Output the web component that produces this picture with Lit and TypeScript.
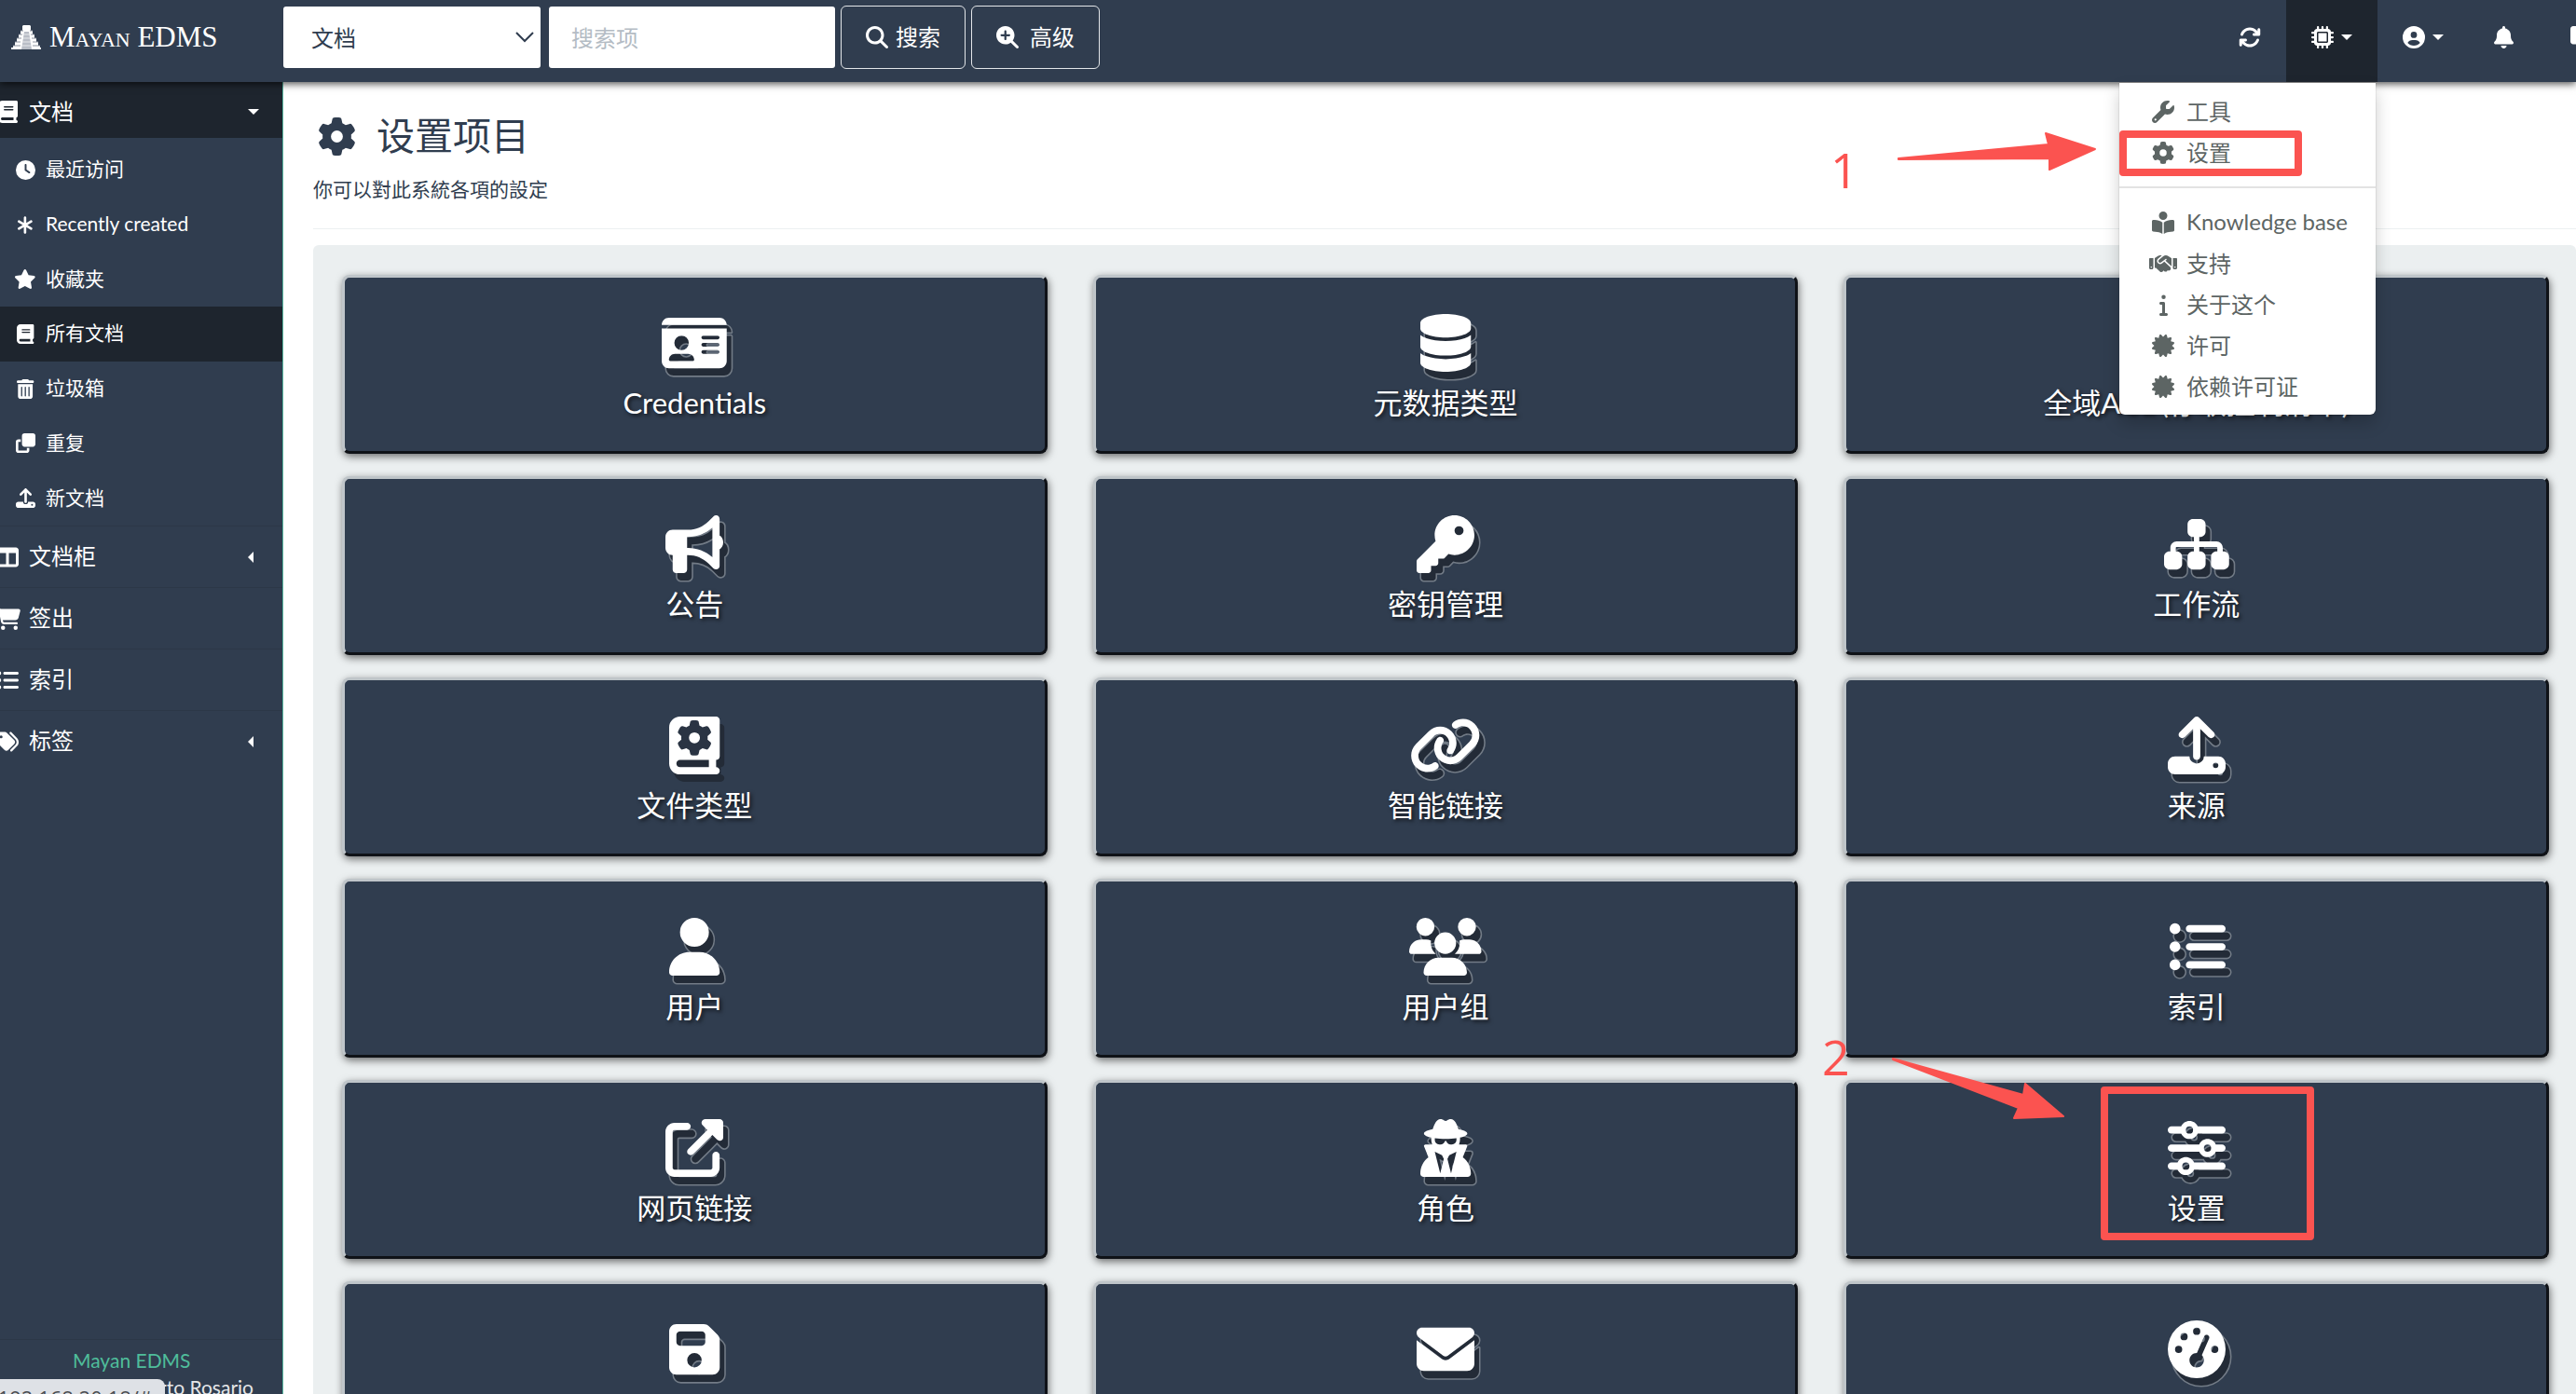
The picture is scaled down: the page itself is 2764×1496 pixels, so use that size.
import { LitElement, html, svg, css, nothing } from "lit";
import { customElement, property } from "lit/decorators.js";
import { classMap } from "lit/directives/class-map.js";

type Glyph = { w: number; d: string };

const DISK =
  "M192 352H64c-35.3 0-64 28.7-64 64v32c0 35.3 28.7 64 64 64H448c35.3 0 64-28.7 64-64V416c0-35.3-28.7-64-64-64H320a64 64 0 0 1-128 0zM424 408a24 24 0 1 1 0 48 24 24 0 1 1 0-48zM233.4 9.4c12.5-12.5 32.8-12.5 45.3 0l128 128c12.5 12.5 12.5 32.8 0 45.3s-32.8 12.5-45.3 0L288 109.3V352c0 17.7-14.3 32-32 32s-32-14.3-32-32V109.3l-73.4 73.4c-12.5 12.5-32.8 12.5-45.3 0s-12.5-32.8 0-45.3l128-128z";

const GEAR =
  "M495.9 166.6c3.2 8.7 .5 18.4-6.4 24.6l-43.3 39.4c1.1 8.3 1.7 16.8 1.7 25.4s-.6 17.1-1.7 25.4l43.3 39.4c6.9 6.2 9.6 15.9 6.4 24.6c-4.4 11.9-9.7 23.3-15.8 34.3l-4.7 8.1c-6.6 11-14 21.4-22.1 31.2c-5.9 7.2-15.7 9.6-24.5 6.8l-55.7-17.7c-13.4 10.3-28.2 18.9-44 25.4l-12.5 57.1c-2 9.1-9 16.3-18.2 17.8c-13.8 2.3-28 3.5-42.5 3.5s-28.7-1.2-42.5-3.5c-9.2-1.5-16.2-8.7-18.2-17.8l-12.5-57.1c-15.8-6.5-30.6-15.1-44-25.4L83.1 425.9c-8.8 2.8-18.6 .3-24.5-6.8c-8.1-9.8-15.5-20.2-22.1-31.2l-4.7-8.1c-6.1-11-11.4-22.4-15.8-34.3c-3.2-8.7-.5-18.4 6.4-24.6l43.3-39.4C64.6 273.1 64 264.6 64 256s.6-17.1 1.7-25.4L22.4 191.2c-6.9-6.2-9.6-15.9-6.4-24.6c4.4-11.9 9.7-23.3 15.8-34.3l4.7-8.1c6.6-11 14-21.4 22.1-31.2c5.9-7.2 15.7-9.6 24.5-6.8l55.7 17.7c13.4-10.3 28.2-18.9 44-25.4l12.5-57.1c2-9.1 9-16.3 18.2-17.8C227.3 1.2 241.5 0 256 0s28.7 1.2 42.5 3.5c9.2 1.5 16.2 8.7 18.2 17.8l12.5 57.1c15.8 6.5 30.6 15.1 44 25.4l55.7-17.7c8.8-2.8 18.6-.3 24.5 6.8c8.1 9.8 15.5 20.2 22.1 31.2l4.7 8.1c6.1 11 11.4 22.4 15.8 34.3zM256 336a80 80 0 1 0 0-160 80 80 0 1 0 0 160z";

const BOOK_BODY =
  "M96 0C43 0 0 43 0 96V416c0 53 43 96 96 96H384h32c17.7 0 32-14.3 32-32s-14.3-32-32-32V384c17.7 0 32-14.3 32-32V32c0-17.7-14.3-32-32-32H384 96zm0 384H352v64H96c-17.7 0-32-14.3-32-32s14.3-32 32-32z";

const ICONS: Record<string, Glyph> = {
  gear: { w: 512, d: GEAR },
  upload: { w: 512, d: DISK },
  bookBody: { w: 448, d: BOOK_BODY },
  book: {
    w: 448,
    d: BOOK_BODY +
      "M128 144c0-8.8 7.2-16 16-16H336c8.8 0 16 7.2 16 16s-7.2 16-16 16H144c-8.8 0-16-7.2-16-16zm16 48H336c8.8 0 16 7.2 16 16s-7.2 16-16 16H144c-8.8 0-16-7.2-16-16s7.2-16 16-16z",
  },
  idCard: {
    w: 576,
    d: "M0 96l576 0c0-35.3-28.7-64-64-64L64 32C28.7 32 0 60.7 0 96zm0 32L0 416c0 35.3 28.7 64 64 64l448 0c35.3 0 64-28.7 64-64l0-288L0 128zM64 405.3c0-29.5 23.9-53.3 53.3-53.3l117.3 0c29.5 0 53.3 23.9 53.3 53.3c0 5.9-4.8 10.7-10.7 10.7L74.7 416c-5.9 0-10.7-4.8-10.7-10.7zM176 192a64 64 0 1 1 0 128 64 64 0 1 1 0-128zm176 16c0-8.8 7.2-16 16-16l128 0c8.8 0 16 7.2 16 16s-7.2 16-16 16l-128 0c-8.8 0-16-7.2-16-16zm0 64c0-8.8 7.2-16 16-16l128 0c8.8 0 16 7.2 16 16s-7.2 16-16 16l-128 0c-8.8 0-16-7.2-16-16zm0 64c0-8.8 7.2-16 16-16l128 0c8.8 0 16 7.2 16 16s-7.2 16-16 16l-128 0c-8.8 0-16-7.2-16-16z",
  },
  database: {
    w: 448,
    d: "M448 80v48c0 44.2-100.3 80-224 80S0 172.2 0 128V80C0 35.8 100.3 0 224 0S448 35.8 448 80zM393.2 214.7c20.8-7.4 39.9-16.9 54.8-28.6V288c0 44.2-100.3 80-224 80S0 332.2 0 288V186.1c14.9 11.8 34 21.2 54.8 28.6C99.7 230.7 159.5 240 224 240s124.3-9.3 169.2-25.3zM0 346.1c14.9 11.8 34 21.2 54.8 28.6C99.7 390.7 159.5 400 224 400s124.3-9.3 169.2-25.3c20.8-7.4 39.9-16.9 54.8-28.6V432c0 44.2-100.3 80-224 80S0 476.2 0 432V346.1z",
  },
  lock: {
    w: 448,
    d: "M144 144v48H304V144c0-44.2-35.8-80-80-80s-80 35.8-80 80zM80 192V144C80 64.5 144.5 0 224 0s144 64.5 144 144v48h16c35.3 0 64 28.7 64 64V448c0 35.3-28.7 64-64 64H64c-35.3 0-64-28.7-64-64V256c0-35.3 28.7-64 64-64H80z",
  },
  bullhorn: {
    w: 512,
    d: "M480 32c0-12.9-7.8-24.6-19.8-29.6s-25.7-2.2-34.9 6.9L381.7 53c-48 48-113.1 75-181 75H192 160 64c-35.3 0-64 28.7-64 64v96c0 35.3 28.7 64 64 64l0 128c0 17.7 14.3 32 32 32h64c17.7 0 32-14.3 32-32V352l8.7 0c67.9 0 133 27 181 75l43.6 43.6c9.2 9.2 22.9 11.9 34.9 6.9s19.8-16.6 19.8-29.6V300.4c18.6-8.8 32-32.5 32-60.4s-13.4-51.6-32-60.4V32zm-64 76.7V240 371.3C357.2 317.8 280.5 288 200.7 288H192V192h8.7c79.8 0 156.5-29.8 215.3-83.3z",
  },
  key: {
    w: 512,
    d: "M336 352c97.2 0 176-78.8 176-176S433.2 0 336 0S160 78.8 160 176c0 18.7 2.9 36.8 8.3 53.7L7 391c-4.5 4.5-7 10.6-7 17v80c0 13.3 10.7 24 24 24h80c13.3 0 24-10.7 24-24V448h40c13.3 0 24-10.7 24-24V384h40c6.4 0 12.5-2.5 17-7l33.3-33.3c16.9 5.4 35 8.3 53.7 8.3zM376 96a40 40 0 1 1 0 80 40 40 0 1 1 0-80z",
  },
  sitemap: {
    w: 576,
    d: "M208 80c0-26.5 21.5-48 48-48h64c26.5 0 48 21.5 48 48v64c0 26.5-21.5 48-48 48h-8v40H464c30.9 0 56 25.1 56 56v32h8c26.5 0 48 21.5 48 48v64c0 26.5-21.5 48-48 48H464c-26.5 0-48-21.5-48-48V368c0-26.5 21.5-48 48-48h8V288c0-4.4-3.6-8-8-8H312v40h8c26.5 0 48 21.5 48 48v64c0 26.5-21.5 48-48 48H256c-26.5 0-48-21.5-48-48V368c0-26.5 21.5-48 48-48h8V280H112c-4.4 0-8 3.6-8 8v32h8c26.5 0 48 21.5 48 48v64c0 26.5-21.5 48-48 48H48c-26.5 0-48-21.5-48-48V368c0-26.5 21.5-48 48-48h8V288c0-30.9 25.1-56 56-56H264V192h-8c-26.5 0-48-21.5-48-48V80z",
  },
  link: {
    w: 640,
    d: "M579.8 267.7c56.5-56.5 56.5-148 0-204.5c-50-50-128.8-56.5-186.3-15.4l-1.6 1.1c-14.4 10.3-17.7 30.3-7.4 44.6s30.3 17.7 44.6 7.4l1.6-1.1c32.1-22.9 76-19.3 103.8 8.6c31.5 31.5 31.5 82.5 0 114L422.3 334.8c-31.5 31.5-82.5 31.5-114 0c-27.9-27.9-31.5-71.8-8.6-103.8l1.1-1.6c10.3-14.4 6.9-34.4-7.4-44.6s-34.4-6.9-44.6 7.4l-1.1 1.6C206.5 251.2 213 330 263 380c56.5 56.5 148 56.5 204.5 0L579.8 267.7zM60.2 244.3c-56.5 56.5-56.5 148 0 204.5c50 50 128.8 56.5 186.3 15.4l1.6-1.1c14.4-10.3 17.7-30.3 7.4-44.6s-30.3-17.7-44.6-7.4l-1.6 1.1c-32.1 22.9-76 19.3-103.8-8.6C74 372 74 321 105.5 289.5L217.7 177.2c31.5-31.5 82.5-31.5 114 0c27.9 27.9 31.5 71.8 8.6 103.9l-1.1 1.6c-10.3 14.4-6.9 34.4 7.4 44.6s34.4 6.9 44.6-7.4l1.1-1.6C433.5 260.8 427 182 377 132c-56.5-56.5-148-56.5-204.5 0L60.2 244.3z",
  },
  user: {
    w: 448,
    d: "M224 256A128 128 0 1 0 224 0a128 128 0 1 0 0 256zm-45.7 48C79.8 304 0 383.8 0 482.3C0 498.7 13.3 512 29.7 512H418.3c16.4 0 29.7-13.3 29.7-29.7C448 383.8 368.2 304 269.7 304H178.3z",
  },
  users: {
    w: 640,
    d: "M144 0a80 80 0 1 1 0 160A80 80 0 1 1 144 0zM512 0a80 80 0 1 1 0 160A80 80 0 1 1 512 0zM0 298.7C0 239.8 47.8 192 106.7 192h42.7c15.9 0 31 3.5 44.6 9.7c-1.3 7.2-1.9 14.7-1.9 22.3c0 38.2 16.8 72.5 43.3 96c-.2 0-.4 0-.7 0H21.3C9.6 320 0 310.4 0 298.7zM405.3 320c-.2 0-.4 0-.7 0c26.6-23.5 43.3-57.8 43.3-96c0-7.6-.7-15-1.9-22.3c13.6-6.3 28.7-9.7 44.6-9.7h42.7C592.2 192 640 239.8 640 298.7c0 11.8-9.6 21.3-21.3 21.3H405.3zM224 224a96 96 0 1 1 192 0 96 96 0 1 1 -192 0zM128 485.3C128 411.7 187.7 352 261.3 352H378.7C452.3 352 512 411.7 512 485.3c0 14.7-11.9 26.7-26.7 26.7H154.7c-14.7 0-26.7-11.9-26.7-26.7z",
  },
  list: {
    w: 512,
    d: "M64 144a48 48 0 1 0 0-96 48 48 0 1 0 0 96zM192 64c-17.7 0-32 14.3-32 32s14.3 32 32 32H480c17.7 0 32-14.3 32-32s-14.3-32-32-32H192zm0 160c-17.7 0-32 14.3-32 32s14.3 32 32 32H480c17.7 0 32-14.3 32-32s-14.3-32-32-32H192zm0 160c-17.7 0-32 14.3-32 32s14.3 32 32 32H480c17.7 0 32-14.3 32-32s-14.3-32-32-32H192zM64 464a48 48 0 1 0 0-96 48 48 0 1 0 0 96zm48-208a48 48 0 1 0 -96 0 48 48 0 1 0 96 0z",
  },
  external: {
    w: 512,
    d: "M352 0c-12.9 0-24.6 7.8-29.6 19.8s-2.2 25.7 6.9 34.9L370.7 96 201.4 265.4c-12.5 12.5-12.5 32.8 0 45.3s32.8 12.5 45.3 0L416 141.3l41.4 41.4c9.2 9.2 22.9 11.9 34.9 6.9s19.8-16.6 19.8-29.6V32c0-17.7-14.3-32-32-32H352zM80 32C35.8 32 0 67.8 0 112V432c0 44.2 35.8 80 80 80H400c44.2 0 80-35.8 80-80V320c0-17.7-14.3-32-32-32s-32 14.3-32 32V432c0 8.8-7.2 16-16 16H80c-8.8 0-16-7.2-16-16V112c0-8.8 7.2-16 16-16H192c17.7 0 32-14.3 32-32s-14.3-32-32-32H80z",
  },
  secret: {
    w: 448,
    d: "M224 16c-6.7 0-10.8-2.8-15.5-6.1C201.9 5.4 194 0 176 0c-30.5 0-52 43.7-66 89.4C62.7 98.1 32 112.2 32 128c0 14.3 25 27.1 64.6 35.9c-.4 4-.6 8-.6 12.1c0 17 3.3 33.2 9.3 48H45.4C38 224 32 230 32 237.4c0 1.7 .3 3.4 1 5l38.8 96.9C28.2 371.8 0 423.8 0 482.3C0 498.7 13.3 512 29.7 512H418.3c16.4 0 29.7-13.3 29.7-29.7c0-58.5-28.2-110.4-71.7-143L415 242.4c.6-1.6 1-3.3 1-5c0-7.4-6-13.4-13.4-13.4H342.7c6-14.8 9.3-31 9.3-48c0-4.1-.2-8.1-.6-12.1C391 155.1 416 142.3 416 128c0-15.8-30.7-29.9-78-38.6C324 43.7 302.5 0 272 0c-18 0-25.9 5.4-32.5 9.9c-4.8 3.3-8.8 6.1-15.5 6.1zm56 208H267.6c-16.5 0-31.1-10.6-36.3-26.2c-2.3-7-12.2-7-14.5 0c-5.2 15.6-19.9 26.2-36.3 26.2H168c-22.1 0-40-17.9-40-40V169.6c28.2 4.1 61 6.4 96 6.4s67.8-2.3 96-6.4V184c0 22.1-17.9 40-40 40zm-88 96l16 32L176 480 128 288l64 32zm128-32L272 480 240 352l16-32 64-32z",
  },
  sliders: {
    w: 512,
    d: "M0 416c0 17.7 14.3 32 32 32l54.7 0c12.3 28.3 40.5 48 73.3 48s61-19.7 73.3-48L480 448c17.7 0 32-14.3 32-32s-14.3-32-32-32l-246.7 0c-12.3-28.3-40.5-48-73.3-48s-61 19.7-73.3 48L32 384c-17.7 0-32 14.3-32 32zm128 0a32 32 0 1 1 64 0 32 32 0 1 1 -64 0zM320 256a32 32 0 1 1 64 0 32 32 0 1 1 -64 0zm32-80c-32.8 0-61 19.7-73.3 48L32 224c-17.7 0-32 14.3-32 32s14.3 32 32 32l246.7 0c12.3 28.3 40.5 48 73.3 48s61-19.7 73.3-48l54.7 0c17.7 0 32-14.3 32-32s-14.3-32-32-32l-54.7 0c-12.3-28.3-40.5-48-73.3-48zM192 128a32 32 0 1 1 0-64 32 32 0 1 1 0 64zm73.3-64C253 35.7 224.8 16 192 16s-61 19.7-73.3 48L32 64C14.3 64 0 78.3 0 96s14.3 32 32 32l86.7 0c12.3 28.3 40.5 48 73.3 48s61-19.7 73.3-48L480 128c17.7 0 32-14.3 32-32s-14.3-32-32-32L265.3 64z",
  },
  floppy: {
    w: 448,
    d: "M64 32C28.7 32 0 60.7 0 96V416c0 35.3 28.7 64 64 64H384c35.3 0 64-28.7 64-64V173.3c0-17-6.7-33.3-18.7-45.3L352 50.7C340 38.7 323.7 32 306.7 32H64zm0 96c0-17.7 14.3-32 32-32H288c17.7 0 32 14.3 32 32v64c0 17.7-14.3 32-32 32H96c-17.7 0-32-14.3-32-32V128zM224 288a64 64 0 1 1 0 128 64 64 0 1 1 0-128z",
  },
  envelope: {
    w: 512,
    d: "M48 64C21.5 64 0 85.5 0 112c0 15.1 7.1 29.3 19.2 38.4L236.8 313.6c11.4 8.5 27 8.5 38.4 0L492.8 150.4c12.1-9.1 19.2-23.3 19.2-38.4c0-26.5-21.5-48-48-48H48zM0 176V384c0 35.3 28.7 64 64 64H448c35.3 0 64-28.7 64-64V176L294.4 339.2c-22.8 17.1-54 17.1-76.8 0L0 176z",
  },
  gauge: {
    w: 512,
    d: "M0 256a256 256 0 1 1 512 0A256 256 0 1 1 0 256zM288 96a32 32 0 1 0 -64 0 32 32 0 1 0 64 0zM256 416c35.3 0 64-28.7 64-64c0-17.4-6.9-33.1-18.1-44.6L366 161.7c5.3-12.1-.2-26.3-12.3-31.6s-26.3 .2-31.6 12.3L257.9 288c-.6 0-1.3 0-1.9 0c-35.3 0-64 28.7-64 64s28.7 64 64 64zM176 144a32 32 0 1 0 -64 0 32 32 0 1 0 64 0zM96 288a32 32 0 1 0 0-64 32 32 0 1 0 0 64zm352-32a32 32 0 1 0 -64 0 32 32 0 1 0 64 0z",
  },
  search: {
    w: 512,
    d: "M416 208c0 45.9-14.9 88.3-40 122.7L502.6 457.4c12.5 12.5 12.5 32.8 0 45.3s-32.8 12.5-45.3 0L330.7 376c-34.4 25.2-76.8 40-122.7 40C93.1 416 0 322.9 0 208S93.1 0 208 0S416 93.1 416 208zM208 352a144 144 0 1 0 0-288 144 144 0 1 0 0 288z",
  },
  searchPlus: {
    w: 512,
    d: "M416 208c0 45.9-14.9 88.3-40 122.7L502.6 457.4c12.5 12.5 12.5 32.8 0 45.3s-32.8 12.5-45.3 0L330.7 376c-34.4 25.2-76.8 40-122.7 40C93.1 416 0 322.9 0 208S93.1 0 208 0S416 93.1 416 208zM184 296c0 13.3 10.7 24 24 24s24-10.7 24-24V232h64c13.3 0 24-10.7 24-24s-10.7-24-24-24H232V120c0-13.3-10.7-24-24-24s-24 10.7-24 24v64H120c-13.3 0-24 10.7-24 24s10.7 24 24 24h64v64z",
  },
  rotate: {
    w: 512,
    d: "M105.1 202.6c7.7-21.8 20.2-42.3 37.8-59.8c62.5-62.5 163.8-62.5 226.3 0L386.3 160H352c-17.7 0-32 14.3-32 32s14.3 32 32 32H463.5h.4c17.7 0 32-14.3 32-32V80c0-17.7-14.3-32-32-32s-32 14.3-32 32v35.2L414.4 97.6c-87.5-87.5-229.3-87.5-316.8 0C73.2 122 55.6 150.7 44.8 181.4c-5.9 16.7 2.9 34.9 19.5 40.8s34.9-2.9 40.8-19.5zM39 289.3c-5 1.5-9.8 4.2-13.7 8.2c-4 4-6.7 8.8-8.1 14c-.3 1.2-.6 2.5-.8 3.8c-.3 1.7-.4 3.4-.4 5.1V432c0 17.7 14.3 32 32 32s32-14.3 32-32V396.9l17.6 17.5c87.5 87.4 229.3 87.4 316.7 0c24.4-24.4 42.1-53.1 52.9-83.7c5.9-16.7-2.9-34.9-19.5-40.8s-34.9 2.9-40.8 19.5c-7.7 21.8-20.2 42.3-37.8 59.8c-62.5 62.5-163.8 62.5-226.3 0l-.1-.1L125.6 352H160c17.7 0 32-14.3 32-32s-14.3-32-32-32H48.4c-1.6 0-3.2 .1-4.8 .3s-3.1 .5-4.6 1z",
  },
  chip: {
    w: 512,
    d: "M176 24c0-13.3-10.7-24-24-24s-24 10.7-24 24v40c-35.3 0-64 28.7-64 64H24c-13.3 0-24 10.7-24 24s10.7 24 24 24h40v56H24c-13.3 0-24 10.7-24 24s10.7 24 24 24h40v56H24c-13.3 0-24 10.7-24 24s10.7 24 24 24h40c0 35.3 28.7 64 64 64v40c0 13.3 10.7 24 24 24s24-10.7 24-24v-40h56v40c0 13.3 10.7 24 24 24s24-10.7 24-24v-40h56v40c0 13.3 10.7 24 24 24s24-10.7 24-24v-40c35.3 0 64-28.7 64-64h40c13.3 0 24-10.7 24-24s-10.7-24-24-24h-40v-56h40c13.3 0 24-10.7 24-24s-10.7-24-24-24h-40v-56h40c13.3 0 24-10.7 24-24s-10.7-24-24-24h-40c0-35.3-28.7-64-64-64V24c0-13.3-10.7-24-24-24s-24 10.7-24 24v40h-56V24c0-13.3-10.7-24-24-24s-24 10.7-24 24v40h-56V24zM160 128H352c17.7 0 32 14.3 32 32V352c0 17.7-14.3 32-32 32H160c-17.7 0-32-14.3-32-32V160c0-17.7 14.3-32 32-32zm192 32H160V352H352V160z",
  },
  circleUser: {
    w: 512,
    d: "M399 384.2C376.9 345.8 335.4 320 288 320H224c-47.4 0-88.9 25.8-111 64.2c35.2 39.2 86.2 63.8 143 63.8s107.8-24.7 143-63.8zM0 256a256 256 0 1 1 512 0A256 256 0 1 1 0 256zm256 16a72 72 0 1 0 0-144 72 72 0 1 0 0 144z",
  },
  bell: {
    w: 448,
    d: "M224 0c-17.7 0-32 14.3-32 32V51.2C119 66 64 130.6 64 208v18.8c0 47-17.3 92.4-48.5 127.6l-7.4 8.3c-8.4 9.4-10.4 22.9-5.3 34.4S19.4 416 32 416H416c12.6 0 24-7.4 29.2-18.9s3.1-25-5.3-34.4l-7.4-8.3C401.3 319.2 384 273.9 384 226.8V208c0-77.4-55-142-128-156.8V32c0-17.7-14.3-32-32-32zm45.3 493.3c12-12 18.7-28.3 18.7-45.3H224 160c0 17 6.7 33.3 18.7 45.3s28.3 18.7 45.3 18.7s33.3-6.7 45.3-18.7z",
  },
  message: {
    w: 512,
    d: "M64 0C28.7 0 0 28.7 0 64V352c0 35.3 28.7 64 64 64h96v80c0 6.1 3.4 11.6 8.8 14.3s11.9 2.1 16.8-1.5L309.3 416H448c35.3 0 64-28.7 64-64V64c0-35.3-28.7-64-64-64H64z",
  },
  clock: {
    w: 512,
    d: "M256 0a256 256 0 1 1 0 512A256 256 0 1 1 256 0zM232 120V256c0 8 4 15.5 10.7 20l96 64c11 7.4 25.9 4.4 33.3-6.7s4.4-25.9-6.7-33.3L280 243.2V120c0-13.3-10.7-24-24-24s-24 10.7-24 24z",
  },
  asterisk: {
    w: 384,
    d: "M192 32c17.7 0 32 14.3 32 32V199.5l111.5-66.9c15.2-9.1 34.8-4.2 43.9 11s4.2 34.8-11 43.9L254.2 256l114.3 68.6c15.2 9.1 20.1 28.7 11 43.9s-28.7 20.1-43.9 11L224 312.5V448c0 17.7-14.3 32-32 32s-32-14.3-32-32V312.5L48.5 379.4c-15.2 9.1-34.8 4.2-43.9-11s-4.2-34.8 11-43.9L129.8 256 15.5 187.4c-15.2-9.1-20.1-28.7-11-43.9s28.7-20.1 43.9-11L160 199.5V64c0-17.7 14.3-32 32-32z",
  },
  star: {
    w: 576,
    d: "M316.9 18C311.6 7 300.4 0 288.1 0s-23.4 7-28.8 18L195 150.3 51.4 171.5c-12 1.8-22 10.2-25.7 21.7s-.7 24.2 7.9 32.7L137.8 329 113.2 474.7c-2 12 3 24.2 12.9 31.3s23 8 33.8 2.3l128.3-68.5 128.3 68.5c10.8 5.7 23.9 4.9 33.8-2.3s14.9-19.3 12.9-31.3L438.5 329 542.7 225.9c8.6-8.5 11.7-21.2 7.9-32.7s-13.7-19.9-25.7-21.7L381.2 150.3 316.9 18z",
  },
  trash: {
    w: 448,
    d: "M135.2 17.7C140.6 6.8 151.7 0 163.8 0H284.2c12.1 0 23.2 6.8 28.6 17.7L320 32h96c17.7 0 32 14.3 32 32s-14.3 32-32 32H32C14.3 96 0 81.7 0 64S14.3 32 32 32h96l7.2-14.3zM32 128H416V448c0 35.3-28.7 64-64 64H96c-35.3 0-64-28.7-64-64V128zm96 64c-8.8 0-16 7.2-16 16V432c0 8.8 7.2 16 16 16s16-7.2 16-16V208c0-8.8-7.2-16-16-16zm96 0c-8.8 0-16 7.2-16 16V432c0 8.8 7.2 16 16 16s16-7.2 16-16V208c0-8.8-7.2-16-16-16zm96 0c-8.8 0-16 7.2-16 16V432c0 8.8 7.2 16 16 16s16-7.2 16-16V208c0-8.8-7.2-16-16-16z",
  },
  clone: {
    w: 512,
    d: "M288 448H64V224h64V160H64c-35.3 0-64 28.7-64 64V448c0 35.3 28.7 64 64 64H288c35.3 0 64-28.7 64-64V384H288v64zm-64-96H448c35.3 0 64-28.7 64-64V64c0-35.3-28.7-64-64-64H224c-35.3 0-64 28.7-64 64V288c0 35.3 28.7 64 64 64z",
  },
  columns: {
    w: 512,
    d: "M0 96C0 60.7 28.7 32 64 32H448c35.3 0 64 28.7 64 64V416c0 35.3-28.7 64-64 64H64c-35.3 0-64-28.7-64-64V96zm64 64V416H224V160H64zm384 0H288V416H448V160z",
  },
  cart: {
    w: 576,
    d: "M0 24C0 10.7 10.7 0 24 0H69.5c22 0 41.5 12.8 50.6 32h411c26.3 0 45.5 25 38.6 50.4l-41 152.3c-8.5 31.4-37 53.3-69.5 53.3H170.7l5.4 28.5c2.2 11.3 12.1 19.5 23.6 19.5H488c13.3 0 24 10.7 24 24s-10.7 24-24 24H199.7c-34.6 0-64.3-24.6-70.7-58.5L77.4 54.5c-.7-3.8-4-6.5-7.9-6.5H24C10.7 48 0 37.3 0 24zM128 464a48 48 0 1 1 96 0 48 48 0 1 1 -96 0zm336-48a48 48 0 1 1 0 96 48 48 0 1 1 0-96z",
  },
  tags: {
    w: 512,
    d: "M345 39.1L472.8 168.4c52.4 53 52.4 138.2 0 191.2L360.8 472.9c-9.3 9.4-24.5 9.5-33.9 .2s-9.5-24.5-.2-33.9L438.6 325.9c33.9-34.3 33.9-89.4 0-123.7L310.9 72.9c-9.3-9.4-9.2-24.6 .2-33.9s24.6-9.2 33.9 .2zM0 229.5V80C0 53.5 21.5 32 48 32H197.5c17 0 33.3 6.7 45.3 18.7l168 168c25 25 25 65.5 0 90.5L277.3 442.7c-25 25-65.5 25-90.5 0l-168-168C6.7 262.7 0 246.5 0 229.5zM144 144a32 32 0 1 0 -64 0 32 32 0 1 0 64 0z",
  },
  wrench: {
    w: 512,
    d: "M352 320c88.4 0 160-71.6 160-160c0-15.3-2.2-30.1-6.2-44.2c-3.1-10.8-16.4-13.2-24.3-5.3l-76.8 76.8c-3 3-7.1 4.7-11.3 4.7H336c-8.8 0-16-7.2-16-16V118.6c0-4.2 1.7-8.3 4.7-11.3l76.8-76.8c7.9-7.9 5.4-21.2-5.3-24.3C382.1 2.2 367.3 0 352 0C263.6 0 192 71.6 192 160c0 19.1 3.4 37.5 9.5 54.5L19.9 396.1C7.2 408.8 0 426.1 0 444.1C0 481.6 30.4 512 67.9 512c18 0 35.3-7.2 48-19.9L297.5 310.5c17 6.2 35.4 9.5 54.5 9.5zM80 408a24 24 0 1 1 0 48 24 24 0 1 1 0-48z",
  },
  reader: {
    w: 512,
    d: "M160 96a96 96 0 1 1 192 0A96 96 0 1 1 160 96zm80 152V512l-48.4-24.2c-20.9-10.4-43.5-17-66.8-19.3l-96-9.6C12.5 457.2 0 443.5 0 427V224c0-17.7 14.3-32 32-32H62.3c63.6 0 125.6 19.6 177.7 56zm32 264V248c52.1-36.4 114.1-56 177.7-56H480c17.7 0 32 14.3 32 32V427c0 16.4-12.5 30.2-28.8 31.8l-96 9.6c-23.2 2.3-45.9 8.9-66.8 19.3L272 512z",
  },
  handshake: {
    w: 640,
    d: "M323.4 85.2l-96.8 78.4c-16.1 13-19.2 36.4-7 53.1c12.9 17.8 38 21.3 55.3 7.8l99.3-77.2c7-5.4 17-4.2 22.5 2.8s4.2 17-2.8 22.5l-20.9 16.2L512 316.8V128h-.7l-3.9-2.5L434.8 79c-15.3-9.8-33.2-15-51.4-15c-21.8 0-43 7.5-60 21.2zm22.8 124.4l-51.7 40.2C263 274.3 217.3 268 193.7 235.6c-22.2-30.5-16.6-73.1 12.7-96.8l83.2-67.3c-11.6-4.9-24.1-7.4-36.8-7.4C234 64 215.7 69.6 200 80l-72 48V352h28.2l91.4 83.4c19.6 17.9 49.9 16.5 67.8-3.1c5.5-6.1 9.2-13.2 11.1-20.6l17 15.6c19.5 17.9 49.9 16.6 67.8-2.9c4.5-4.9 7.8-10.6 9.9-16.5c19.4 13 45.8 10.3 62.1-7.5c17.9-19.5 16.6-49.9-2.9-67.8l-134.2-123zM16 128c-8.8 0-16 7.2-16 16V352c0 17.7 14.3 32 32 32H64c17.7 0 32-14.3 32-32V128H16zM48 320a16 16 0 1 1 0 32 16 16 0 1 1 0-32zM544 128V352c0 17.7 14.3 32 32 32h32c17.7 0 32-14.3 32-32V144c0-8.8-7.2-16-16-16H544zm32 208a16 16 0 1 1 32 0 16 16 0 1 1 -32 0z",
  },
  info: {
    w: 192,
    d: "M48 80a48 48 0 1 1 96 0A48 48 0 1 1 48 80zM0 224c0-17.7 14.3-32 32-32H96c17.7 0 32 14.3 32 32V448h32c17.7 0 32 14.3 32 32s-14.3 32-32 32H32c-17.7 0-32-14.3-32-32s14.3-32 32-32H64V256H32c-17.7 0-32-14.3-32-32z",
  },
  certificate: {
    w: 512,
    d: "M211 7.3C205 1 196-1.4 187.6 .8s-14.9 8.9-17.1 17.3L154.7 80.6l-62-17.5c-8.4-2.4-17.4 0-23.5 6.1s-8.5 15.1-6.1 23.5l17.5 62L18.1 170.6c-8.4 2.1-15 8.7-17.3 17.1S1 205 7.3 211l46.2 45L7.3 301C1 307-1.4 316 .8 324.4s8.9 14.9 17.3 17.1l62.5 15.8-17.5 62c-2.4 8.4 0 17.4 6.1 23.5s15.1 8.5 23.5 6.1l62-17.5 15.8 62.5c2.1 8.4 8.7 15 17.1 17.3s17.3-.2 23.4-6.4l45-46.2 45 46.2c6.1 6.2 15 8.7 23.4 6.4s14.9-8.9 17.1-17.3l15.8-62.5 62 17.5c8.4 2.4 17.4 0 23.5-6.1s8.5-15.1 6.1-23.5l-17.5-62 62.5-15.8c8.4-2.1 15-8.7 17.3-17.1s-.2-17.4-6.4-23.4l-46.2-45 46.2-45c6.2-6.1 8.7-15 6.4-23.4s-8.9-14.9-17.3-17.1l-62.5-15.8 17.5-62c2.4-8.4 0-17.4-6.1-23.5s-15.1-8.5-23.5-6.1l-62 17.5L341.4 18.1c-2.1-8.4-8.7-15-17.1-17.3S307 1 301 7.3L256 53.5 211 7.3z",
  },
};

/** A glyph drawn at the height set by its font-size; width follows the shape. */
@customElement("ui-icon")
export class UiIcon extends LitElement {
  @property() name = "gear";
  @property({ type: Boolean }) raised = false;

  static styles = css`
    :host {
      display: inline-flex;
      justify-content: center;
      flex: none;
    }
    .glyph {
      display: block;
      height: 1em;
      width: auto;
      overflow: visible;
      fill: currentColor;
      fill-rule: evenodd;
    }
    .shade {
      fill: #232b37;
      stroke: #727b86;
      stroke-width: 26;
      stroke-linejoin: round;
      paint-order: stroke;
    }
    .plain {
      stroke: none;
    }
    .inset {
      fill: #2a3443;
    }
  `;

  render() {
    const withGear = this.name === "bookGear";
    const glyph = ICONS[withGear ? "bookBody" : this.name];
    return html`<svg class="glyph" viewBox="0 0 ${glyph.w} 512" aria-hidden="true">
      ${this.raised
        ? svg`<path class=${classMap({ shade: true, plain: withGear })} transform="translate(41 66)" d=${glyph.d}></path>`
        : nothing}
      <path d=${glyph.d}></path>
      ${withGear
        ? svg`<path class="inset" transform="translate(68 32) scale(0.61)" d=${GEAR}></path>`
        : nothing}
    </svg>`;
  }
}

type Entry = { icon: string; text: string; active?: boolean; caret?: boolean };

const DOCUMENT_LINKS: Entry[] = [
  { icon: "clock", text: "最近访问" },
  { icon: "asterisk", text: "Recently created" },
  { icon: "star", text: "收藏夹" },
  { icon: "book", text: "所有文档", active: true },
  { icon: "trash", text: "垃圾箱" },
  { icon: "clone", text: "重复" },
  { icon: "upload", text: "新文档" },
];

const SECTIONS: Entry[] = [
  { icon: "columns", text: "文档柜", caret: true },
  { icon: "cart", text: "签出" },
  { icon: "list", text: "索引" },
  { icon: "tags", text: "标签", caret: true },
];

const MENU_TOP: Entry[] = [
  { icon: "wrench", text: "工具" },
  { icon: "gear", text: "设置" },
];

const MENU_BOTTOM: Entry[] = [
  { icon: "reader", text: "Knowledge base" },
  { icon: "handshake", text: "支持" },
  { icon: "info", text: "关于这个" },
  { icon: "certificate", text: "许可" },
  { icon: "certificate", text: "依赖许可证" },
];

const CARDS: Entry[] = [
  { icon: "idCard", text: "Credentials" },
  { icon: "database", text: "元数据类型" },
  { icon: "lock", text: "全域ACL (存取控制清单)" },
  { icon: "bullhorn", text: "公告" },
  { icon: "key", text: "密钥管理" },
  { icon: "sitemap", text: "工作流" },
  { icon: "bookGear", text: "文件类型" },
  { icon: "link", text: "智能链接" },
  { icon: "upload", text: "来源" },
  { icon: "user", text: "用户" },
  { icon: "users", text: "用户组" },
  { icon: "list", text: "索引" },
  { icon: "external", text: "网页链接" },
  { icon: "secret", text: "角色" },
  { icon: "sliders", text: "设置" },
  { icon: "floppy", text: "" },
  { icon: "envelope", text: "" },
  { icon: "gauge", text: "" },
];

@customElement("app-root")
export class AppRoot extends LitElement {
  static styles = css`
    :host {
      display: block;
      font-family: Lato, "Noto Sans CJK SC", sans-serif;
      font-size: 24px;
      color: #303d4f;
      --navy: #303d4f;
      --ink: #1e252e;
      --red: #fb5350;
    }
    * {
      box-sizing: border-box;
    }
    a {
      color: inherit;
      text-decoration: none;
    }
    .page {
      position: relative;
      display: grid;
      grid-template-columns: 304px 1fr;
      grid-template-rows: 88px 1fr;
      height: 100vh;
      overflow: hidden;
      background: #fff;
    }

    /* top bar */
    .topbar {
      grid-column: 1 / -1;
      position: relative;
      z-index: 2;
      display: flex;
      align-items: stretch;
      background: var(--navy);
      color: #fff;
      box-shadow: 0 2px 8px rgba(0, 0, 0, 0.7);
    }
    .brand {
      width: 304px;
      display: flex;
      align-items: center;
      gap: 8px;
      padding: 0 0 8px 12px;
      font-family: "Liberation Serif", serif;
      font-size: 31px;
      font-variant-caps: small-caps;
      white-space: nowrap;
    }
    .pyramid {
      width: 33px;
      height: 26px;
    }
    .search {
      display: flex;
      align-items: center;
      gap: 6px;
      padding-bottom: 8px;
    }
    .field {
      height: 66px;
      border: 0;
      border-radius: 3px;
      background: #fff;
      color: #303d4f;
      font: inherit;
      outline: none;
    }
    .scope {
      position: relative;
      display: flex;
      align-items: center;
      margin-right: 3px;
    }
    .select {
      width: 276px;
      padding: 0 30px;
      appearance: none;
    }
    .chevron {
      position: absolute;
      right: 7px;
      width: 20px;
      height: 12px;
      fill: none;
      stroke: #303d4f;
      stroke-width: 2;
      pointer-events: none;
    }
    .terms {
      width: 307px;
      padding: 0 24px;
    }
    .terms::placeholder {
      color: #b4bcc4;
      opacity: 1;
    }
    .btn {
      display: flex;
      align-items: center;
      gap: 8px;
      height: 68px;
      padding: 0 26px;
      border: 1px solid #e3e6e9;
      border-radius: 6px;
      background: transparent;
      color: #fff;
      font: inherit;
    }
    .btn.wide {
      gap: 12px;
    }
    .tools {
      display: flex;
      margin-left: auto;
    }
    .tool {
      display: flex;
      align-items: center;
      gap: 8px;
      padding: 0 27px 8px;
      border: 0;
      background: transparent;
      color: #fff;
      font: inherit;
    }
    .tool.open {
      background: var(--ink);
    }
    .tool.last {
      width: 40px;
      padding: 0 0 8px 34px;
      overflow: hidden;
      justify-content: flex-start;
    }
    .caret {
      width: 0;
      height: 0;
      border: 6px solid transparent;
      border-top-color: #fff;
      border-bottom: 0;
    }
    .caret.side {
      margin-right: 6px;
      border: 6px solid transparent;
      border-right-color: #fff;
      border-left: 0;
    }

    /* drop-down under the system button */
    .menu {
      position: absolute;
      z-index: 3;
      top: 89px;
      right: 215px;
      width: 275px;
      padding: 9px 0 8px;
      border-radius: 0 0 6px 6px;
      background: #fff;
      color: #5d6564;
      box-shadow: 0 9px 18px rgba(0, 0, 0, 0.2), 0 0 1px rgba(0, 0, 0, 0.6);
    }
    .menu-item {
      display: flex;
      align-items: center;
      height: 44px;
      padding-left: 32px;
      gap: 10px;
      white-space: nowrap;
    }
    .slot {
      width: 30px;
      display: flex;
      justify-content: center;
      flex: none;
    }
    .text {
      padding-bottom: 4px;
    }
    .rule {
      margin: 14px 0 15px;
      border: 0;
      border-top: 2px solid #e3e3e3;
    }

    /* side bar */
    .sidebar {
      display: flex;
      flex-direction: column;
      min-height: 0;
      border-right: 1px solid #56b59f;
      background: var(--navy);
      color: #fff;
    }
    .section {
      display: flex;
      align-items: center;
      height: 66px;
      padding-right: 25px;
      border-top: 1px solid #2c3848;
    }
    .section.head {
      height: 60px;
      border: 0;
      padding-bottom: 2px;
      padding-top: 6px;
      background: var(--ink);
    }
    .section-icon {
      width: 32px;
      margin-left: -8px;
      margin-right: 7px;
      display: flex;
      justify-content: center;
    }
    .section .caret {
      margin-left: auto;
    }
    .links {
      display: grid;
      grid-auto-rows: 1fr;
      height: 416px;
      padding-top: 5px;
      font-size: 21px;
    }
    .link {
      display: flex;
      align-items: center;
      padding-left: 12px;
      gap: 7px;
    }
    .link.active {
      background: var(--ink);
    }
    .footer {
      position: relative;
      margin-top: auto;
      height: 59px;
      border-top: 1px solid #2c3848;
      font-size: 21px;
      line-height: 29px;
      padding: 7px 31px 0 78px;
    }
    .green {
      display: block;
      color: #4fbd9b;
    }
    .owner {
      display: block;
      text-align: right;
      color: #e4e6e8;
    }
    .status {
      position: absolute;
      left: 0;
      bottom: 0;
      width: 177px;
      height: 16px;
      padding: 8px 14px 0 0;
      display: flex;
      justify-content: flex-end;
      overflow: hidden;
      border-radius: 0 8px 0 0;
      background: #dee1e6;
      color: #4a4d51;
      font-family: "Open Sans", sans-serif;
      font-size: 22px;
      line-height: 24px;
    }

    /* content */
    .main {
      min-width: 0;
      min-height: 0;
      overflow: hidden;
      padding-left: 32px;
    }
    .title {
      display: flex;
      align-items: center;
      gap: 22px;
      margin: 0;
      padding: 28px 0 0 5px;
      font-size: 41px;
      font-weight: 400;
      line-height: 60px;
    }
    .lead {
      margin: 0;
      padding: 12px 0 27px;
      border-bottom: 1px solid #ecf0f1;
      font-size: 21px;
      line-height: 30px;
    }
    .well {
      display: grid;
      grid-template-columns: repeat(3, minmax(0, 1fr));
      gap: 24px 49px;
      margin-top: 17px;
      padding: 32px 29px 32px 31px;
      border-radius: 6px;
      background: #ebeff0;
    }
    .card {
      display: flex;
      flex-direction: column;
      align-items: center;
      gap: 12px;
      height: 192px;
      padding-top: 39px;
      border: 3px solid;
      border-color: #bfc5c9 #0f1217 #0f1217 #bfc5c9;
      border-radius: 8px;
      background: var(--navy);
      color: #fff;
      font-size: 31px;
      line-height: 42px;
      box-shadow: 1px 3px 8px rgba(0, 0, 0, 0.55);
      text-shadow: 2px 2px 4px rgba(0, 0, 0, 0.7);
    }

    .size-big {
      font-size: 62px;
    }
    .size-title {
      font-size: 41px;
    }

    /* red call-outs laid over the page */
    .marks {
      position: absolute;
      z-index: 4;
      inset: 0;
      pointer-events: none;
      color: var(--red);
      font-family: "Open Sans", sans-serif;
      font-size: 52px;
      line-height: 52px;
    }
    .frame {
      position: absolute;
      border: 8px solid var(--red);
      border-radius: 4px;
    }
    .frame.one {
      left: 2274px;
      top: 140px;
      width: 196px;
      height: 49px;
    }
    .frame.two {
      left: 2254px;
      top: 1166px;
      width: 229px;
      height: 165px;
    }
    .digit {
      position: absolute;
    }
    .digit.one {
      left: 1964px;
      top: 156px;
    }
    .digit.two {
      left: 1955px;
      top: 1108px;
    }
    .arrows {
      position: absolute;
      left: 0;
      top: 0;
      width: 2764px;
      height: 1496px;
      fill: var(--red);
      stroke: var(--red);
      stroke-width: 2;
      stroke-linejoin: round;
    }
  `;

  private menuItem(item: Entry) {
    return html`<a class="menu-item" href="#">
      <span class="slot"><ui-icon name=${item.icon}></ui-icon></span><span class="text">${item.text}</span>
    </a>`;
  }

  render() {
    return html`
      <div class="page">
        <header class="topbar">
          <a class="brand" href="#">
            <svg class="pyramid" viewBox="0 0 33 26" aria-hidden="true">
              <path fill="#fff" d="M12 1l1-1h7l1 1v5h2v4h2v4h2v4h2v4h2v2h1v2H0v-2h2v-2h2v-4h2v-4h2v-4h2V6h2z" />
              <path fill="#b9bdc6" d="M14 7h5l3 19h-11z" />
              <path stroke="#e6e8eb" stroke-width="1" d="M13 10h7M13 14h7M12 18h9M12 22h9" />
              <path stroke="#8d939f" stroke-width="1" d="M10 6h3M20 6h3M8 10h4M21 10h4M6 14h5M22 14h5M4 18h6M23 18h6M2 22h8M23 22h8" />
            </svg>
            Mayan EDMS
          </a>
          <form class="search" @submit=${(e: Event) => e.preventDefault()}>
            <div class="scope">
              <select class="field select" aria-label="文档">
                <option>文档</option>
              </select>
              <svg class="chevron" viewBox="0 0 20 12" aria-hidden="true"><path d="M1 1l9 9 9-9" /></svg>
            </div>
            <input class="field terms" type="text" placeholder="搜索项" aria-label="搜索项" />
            <button class="btn" type="submit"><ui-icon name="search"></ui-icon><span class="text">搜索</span></button>
            <button class="btn wide" type="button"><ui-icon name="searchPlus"></ui-icon><span class="text">高级</span></button>
          </form>
          <nav class="tools">
            <button class="tool"><ui-icon name="rotate"></ui-icon></button>
            <button class="tool open"><ui-icon name="chip"></ui-icon><i class="caret"></i></button>
            <button class="tool"><ui-icon name="circleUser"></ui-icon><i class="caret"></i></button>
            <button class="tool"><ui-icon name="bell"></ui-icon></button>
            <button class="tool last"><ui-icon name="message"></ui-icon></button>
          </nav>
        </header>

        <aside class="sidebar">
          <a class="section head" href="#">
            <span class="section-icon"><ui-icon name="book"></ui-icon></span><span class="text">文档</span><i class="caret"></i>
          </a>
          <nav class="links">
            ${DOCUMENT_LINKS.map(
              (l) => html`<a class=${classMap({ link: true, active: !!l.active })} href="#">
                <span class="slot"><ui-icon name=${l.icon}></ui-icon></span><span class="text">${l.text}</span>
              </a>`
            )}
          </nav>
          ${SECTIONS.map(
            (s) => html`<a class="section" href="#">
              <span class="section-icon"><ui-icon name=${s.icon}></ui-icon></span><span class="text">${s.text}</span>
              ${s.caret ? html`<i class="caret side"></i>` : nothing}
            </a>`
          )}
          <footer class="footer">
            <a class="green" href="#">Mayan EDMS</a>
            <span class="owner">Roberto Rosario</span>
            <div class="status">192.168.20.18/#</div>
          </footer>
        </aside>

        <main class="main">
          <h1 class="title"><ui-icon class="size-title" name="gear"></ui-icon>设置项目</h1>
          <p class="lead">你可以對此系統各項的設定</p>
          <section class="well">
            ${CARDS.map(
              (c) => html`<a class="card" href="#">
                <ui-icon class="size-big" name=${c.icon} raised></ui-icon>
                <span>${c.text}</span>
              </a>`
            )}
          </section>
        </main>

        <div class="menu">
          ${MENU_TOP.map((m) => this.menuItem(m))}
          <hr class="rule" />
          ${MENU_BOTTOM.map((m) => this.menuItem(m))}
        </div>

        <div class="marks">
          <svg class="arrows" viewBox="0 0 2764 1496" aria-hidden="true">
            <path d="M2037 170L2198 155L2195 143L2248 160L2199 182L2199 170L2037 171z" />
            <path d="M2031 1136L2171 1175L2173 1163L2214 1198L2161 1200L2166 1189L2031 1137z" />
          </svg>
          <span class="digit one">1</span>
          <span class="digit two">2</span>
          <div class="frame one"></div>
          <div class="frame two"></div>
        </div>
      </div>
    `;
  }
}
